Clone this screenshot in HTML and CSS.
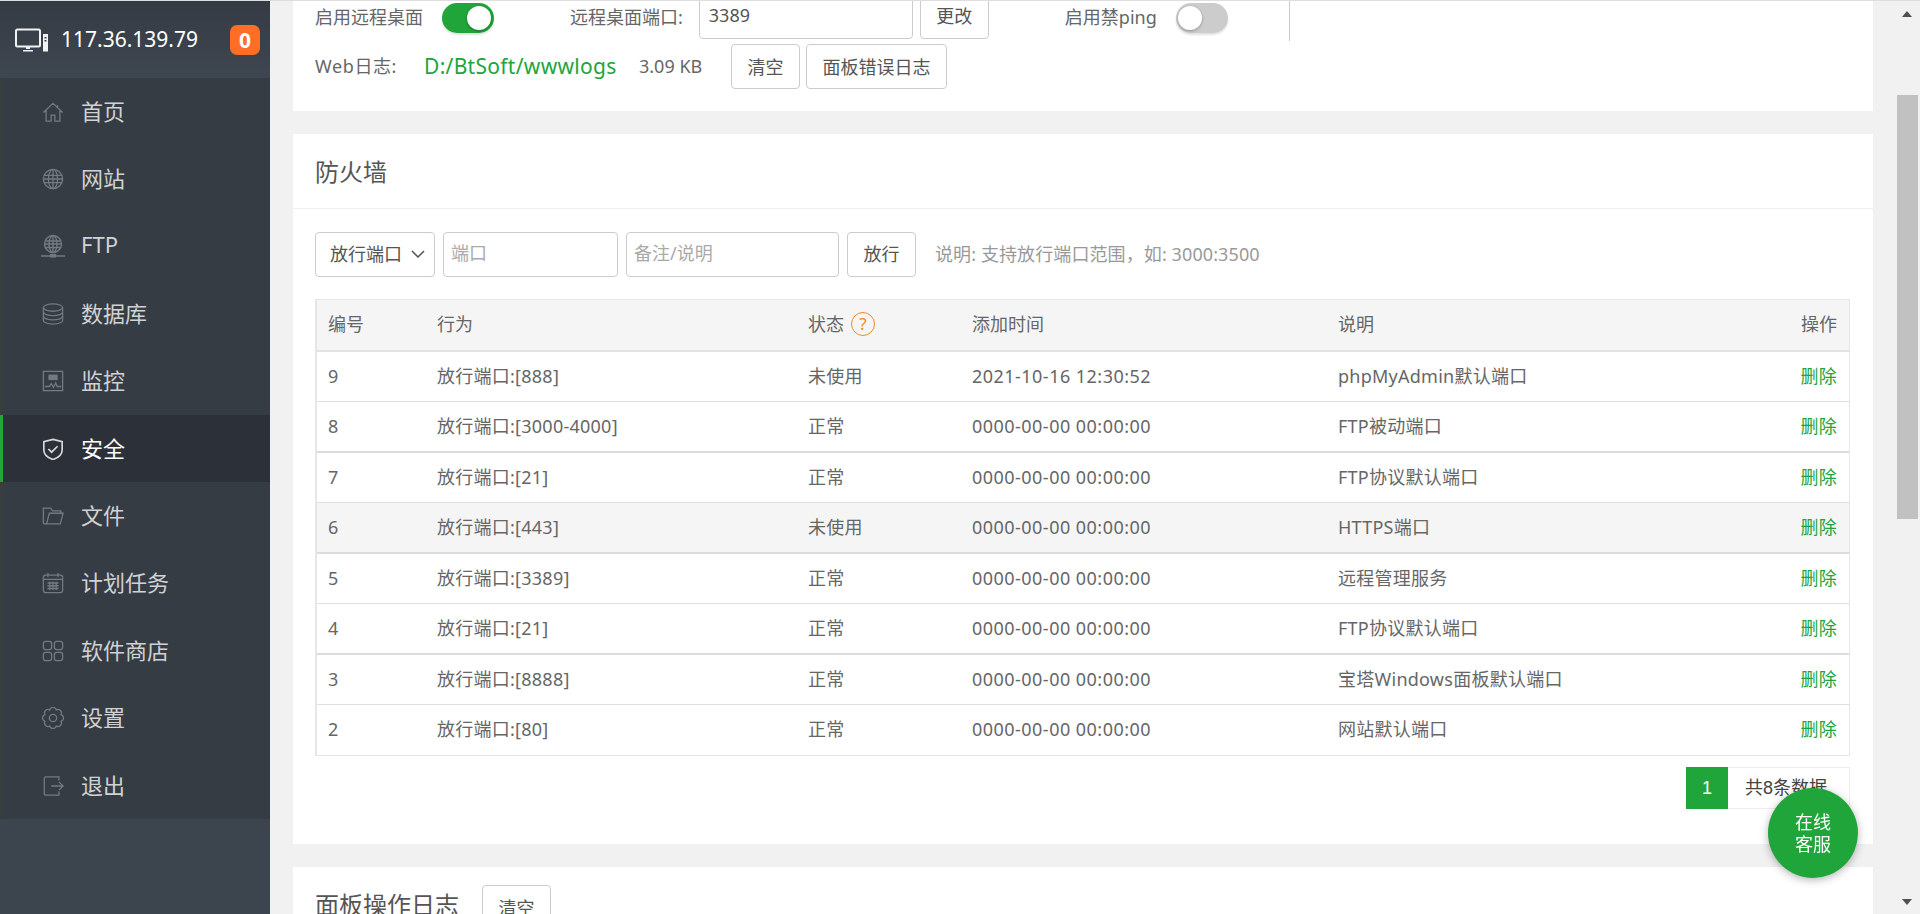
FILE: index.html
```html
<!DOCTYPE html>
<html lang="zh-CN">
<head>
<meta charset="utf-8">
<title>安全</title>
<link rel="stylesheet" href="styles.css">
</head>
<body>
<div class="app">
  <aside class="sidebar">
    <div class="host">
      <svg class="host-icon" viewBox="0 0 33 24" width="33" height="24">
        <rect x="1" y="1.5" width="24" height="17" rx="1.5" fill="none" stroke="#f2f2f2" stroke-width="2"/>
        <path d="M11 19h4v2h-4zM8 22h10v1.5H8z" fill="#f2f2f2"/>
        <path d="M28 6h5v17.5h-5z" fill="#f2f2f2"/>
        <path d="M29.5 9h2v1.5h-2zM29.5 12h2v1.5h-2z" fill="#3a414a"/>
      </svg>
      <span class="host-ip">117.36.139.79</span>
      <span class="badge">0</span>
    </div>
    <nav class="menu">
      <a class="item"><svg class="ico" viewBox="0 0 24 24"><path d="M1.5 12.5 12 2.5l10.5 10M4.5 10.5V22h5.5v-6.5h4V22h5.5V10.5M17 4.5v3"/></svg><span>首页</span></a>
      <a class="item"><svg class="ico" viewBox="0 0 24 24"><circle cx="12" cy="12" r="10.5"/><ellipse cx="12" cy="12" rx="5" ry="10.5"/><path d="M12 1.5v21M2 8h20M1.5 12h21M2 16h20"/></svg><span>网站</span></a>
      <a class="item"><svg class="ico ico-wide" viewBox="0 0 24 24"><circle cx="12" cy="10" r="8.5"/><ellipse cx="12" cy="10" rx="4" ry="8.5"/><path d="M12 1.5v17M4.5 7h15M3.5 10h17M4.5 13.5h15M0 22h24"/><path class="fill" d="M9 20h6v3.5H9z"/></svg><span>FTP</span></a>
      <a class="item"><svg class="ico" viewBox="0 0 24 24"><ellipse cx="12" cy="5" rx="10.5" ry="4"/><path d="M1.500 5v14c0 2.200 4.700 4 10.500 4s10.500-1.800 10.500-4V5M1.500 9.800c0 2.200 4.700 4 10.500 4s10.500-1.800 10.500-4M1.500 14.500c0 2.200 4.700 4 10.500 4s10.500-1.800 10.500-4"/></svg><span>数据库</span></a>
      <a class="item"><svg class="ico" viewBox="0 0 24 24"><rect x="1.500" y="1.500" width="21" height="21"/><path d="M3 18h5l2-3 2.500 4 2.500-5 1.500 4H21"/><path class="fill" d="M7 5h10v6H7z"/></svg><span>监控</span></a>
      <a class="item active"><svg class="ico" viewBox="0 0 24 24"><path d="M12 1.500 22 4v9c0 5-4.500 8.500-10 10.500C6.500 21.500 2 18 2 13V4z"/><path d="m7 12 3.500 3.500L17 9"/></svg><span>安全</span></a>
      <a class="item"><svg class="ico" viewBox="0 0 24 24"><path d="M5 20.500H2.500a1 1 0 0 1-1-1V3.500h8l2 3h9V9M5 20.500 8 9h15l-3 11.500z"/></svg><span>文件</span></a>
      <a class="item"><svg class="ico" viewBox="0 0 24 24"><rect x="1.500" y="3.500" width="21" height="19" rx="2.500"/><path d="M1.500 8h21M6.500 1v4.500M17.500 1v4.500M6 12h12M6 15h12M6 18h12M8.500 10.500v9M12 10.500v9M15.500 10.500v9"/></svg><span>计划任务</span></a>
      <a class="item"><svg class="ico" viewBox="0 0 24 24"><rect x="1.500" y="1.500" width="9" height="9" rx="2.500"/><rect x="13.500" y="1.500" width="9" height="9" rx="2.500"/><rect x="1.500" y="13.500" width="9" height="9" rx="2.500"/><rect x="13.500" y="13.500" width="9" height="9" rx="2.500"/></svg><span>软件商店</span></a>
      <a class="item"><svg class="ico" viewBox="0 0 24 24"><circle cx="12" cy="12" r="4"/><path d="M20.780 8.360A3.800 3.800 0 0 1 20.780 15.640 3.800 3.800 0 0 1 15.640 20.780 3.800 3.800 0 0 1 8.360 20.780 3.800 3.800 0 0 1 3.220 15.640 3.800 3.800 0 0 1 3.220 8.360 3.800 3.800 0 0 1 8.360 3.220 3.800 3.800 0 0 1 15.640 3.220 3.800 3.800 0 0 1 20.780 8.360Z"/></svg><span>设置</span></a>
      <a class="item"><svg class="ico" viewBox="0 0 24 24"><path d="M18.500 6V2H4a1.500 1.500 0 0 0-1.500 1.500v17A1.500 1.500 0 0 0 4 22h14.500v-4M10 12h13M18.500 7.500 23 12l-4.500 4.500"/></svg><span>退出</span></a>
    </nav>
  </aside>

  <main class="main">
    <section class="card card-server">
      <div class="row-top">
        <span class="label">启用远程桌面</span>
        <span class="toggle on"><i></i></span>
        <span class="label port-label">远程桌面端口:</span>
        <input class="field port-input" value="3389">
        <button class="btn change-btn">更改</button>
        <span class="label ping-label">启用禁ping</span>
        <span class="toggle off"><i></i></span>
        <span class="divider"></span>
      </div>
      <div class="row-log">
        <span class="label web-label">Web日志:</span>
        <a class="log-path">D:/BtSoft/wwwlogs</a>
        <span class="label log-size">3.09 KB</span>
        <button class="btn clear-btn">清空</button>
        <button class="btn err-btn">面板错误日志</button>
      </div>
    </section>

    <section class="card card-fw">
      <h2 class="card-title">防火墙</h2>
      <div class="fw-body">
        <div class="toolbar">
          <div class="select"><span>放行端口</span><svg viewBox="0 0 14 8" width="14" height="8"><path d="M1 1l6 6 6-6" fill="none" stroke="#555" stroke-width="1.500"/></svg></div>
          <input class="field port-field" placeholder="端口">
          <input class="field note-field" placeholder="备注/说明">
          <button class="btn allow-btn">放行</button>
          <span class="hint">说明: 支持放行端口范围，如: 3000:3500</span>
        </div>
        <div class="table-box">
          <table class="rules">
            <thead>
              <tr>
                <th class="c1">编号</th><th class="c2">行为</th>
                <th class="c3"><span class="th-status">状态<span class="help">?</span></span></th>
                <th class="c4">添加时间</th><th class="c5">说明</th><th class="c6">操作</th>
              </tr>
            </thead>
            <tbody>
              <tr><td>9</td><td>放行端口:[888]</td><td>未使用</td><td>2021-10-16 12:30:52</td><td>phpMyAdmin默认端口</td><td class="act"><a>删除</a></td></tr>
              <tr class="thick"><td>8</td><td>放行端口:[3000-4000]</td><td>正常</td><td>0000-00-00 00:00:00</td><td>FTP被动端口</td><td class="act"><a>删除</a></td></tr>
              <tr><td>7</td><td>放行端口:[21]</td><td>正常</td><td>0000-00-00 00:00:00</td><td>FTP协议默认端口</td><td class="act"><a>删除</a></td></tr>
              <tr class="thick hover"><td>6</td><td>放行端口:[443]</td><td>未使用</td><td>0000-00-00 00:00:00</td><td>HTTPS端口</td><td class="act"><a>删除</a></td></tr>
              <tr><td>5</td><td>放行端口:[3389]</td><td>正常</td><td>0000-00-00 00:00:00</td><td>远程管理服务</td><td class="act"><a>删除</a></td></tr>
              <tr class="thick"><td>4</td><td>放行端口:[21]</td><td>正常</td><td>0000-00-00 00:00:00</td><td>FTP协议默认端口</td><td class="act"><a>删除</a></td></tr>
              <tr><td>3</td><td>放行端口:[8888]</td><td>正常</td><td>0000-00-00 00:00:00</td><td>宝塔Windows面板默认端口</td><td class="act"><a>删除</a></td></tr>
              <tr class="last"><td>2</td><td>放行端口:[80]</td><td>正常</td><td>0000-00-00 00:00:00</td><td>网站默认端口</td><td class="act"><a>删除</a></td></tr>
            </tbody>
          </table>
        </div>
        <div class="pager"><span class="page-cur">1</span><span class="page-total">共8条数据</span></div>
      </div>
    </section>

    <section class="card card-log">
      <h2 class="card-title-inline">面板操作日志</h2>
      <button class="btn clear-btn">清空</button>
    </section>
  </main>

  <div class="scrollbar">
    <span class="arrow-up"></span>
    <span class="thumb"></span>
    <span class="arrow-down"></span>
  </div>
</div>
<a class="chat">在线<br>客服</a>
</body>
</html>
```
FILE: styles.css
```css
* { box-sizing: border-box; }
html, body { margin: 0; height: 100%; overflow: hidden; }
body {
  background: #f1f1f1;
  border-top: 1px solid #dedede;
  font-family: "Noto Sans", "Noto Sans CJK SC", sans-serif;
  font-size: 18px;
  color: #666;
}
.app { display: flex; height: 913px; overflow: hidden; }

/* sidebar */
.sidebar { flex: 0 0 270px; background: #3c444e; }
.host {
  height: 77px;
  display: flex;
  align-items: center;
  padding: 0 10px 0 15px;
  background: linear-gradient(#343b43, #3e4650);
}
.host-icon { flex: none; margin-right: 13px; }
.host-ip { flex: 1; color: #fff; font-size: 21px; line-height: 30px; white-space: nowrap; padding-bottom: 2px; }
.badge {
  width: 30px; height: 30px;
  border-radius: 7px;
  background: #ff6e24;
  color: #fff;
  font-weight: 700;
  font-size: 21px;
  line-height: 30px;
  text-align: center;
}
.menu { background: #363c44; }
.item {
  height: 67.4px;
  display: flex;
  align-items: center;
  padding-left: 39px;
  border-left: 3px solid #3a3d3d;
  color: #d0d2d4;
  font-size: 22px;
}
.item span { padding-bottom: 4px; }
.item.active { background: #2c3038; border-left-color: #20a53a; color: #fff; }
.ico {
  flex: none;
  width: 22px; height: 22px;
  margin-right: 17px;
  fill: none;
  stroke: #747a80;
  stroke-width: 1.4;
}
.ico-wide { width: 24px; height: 24px; margin-left: -1px; margin-right: 16px; }
.ico .fill { fill: #747a80; stroke: none; }
.active .ico { stroke: #d8d8d8; stroke-width: 1.8; }

/* main */
.main { flex: 1; min-width: 0; padding: 0 22px 0 23px; overflow: hidden; }
.card { background: #fff; }
.card-server { margin-top: -8px; height: 118px; padding: 0 22px; }
.row-top { display: flex; align-items: center; height: 46px; position: relative; }
.label { white-space: nowrap; line-height: 26px; }
.row-top .label { padding-top: 2px; }
.row-log .label { padding-bottom: 2px; }
.toggle {
  flex: none;
  position: relative;
  width: 52px; height: 30px;
  margin-top: 3px;
  border-radius: 15px;
  box-shadow: 0 2px 2px rgba(0, 0, 0, .12);
}
.toggle i {
  position: absolute;
  top: 3px;
  width: 24px; height: 24px;
  border-radius: 50%;
  background: #fff;
  box-shadow: 0 1px 3px rgba(0, 0, 0, .3);
}
.toggle.on { margin-left: 19px; background: #20a53a; }
.toggle.on i { left: 25px; }
.toggle.off { margin-left: 19px; background: #ccc; }
.toggle.off i { left: 2px; }
.port-label { margin-left: 76px; }
.field {
  height: 45px;
  border: 1px solid #ccc;
  border-radius: 4px;
  padding: 0 7px 2px;
  font: inherit;
  color: #555;
  background: #fff;
  outline: none;
}
.field::placeholder { color: #aaa; opacity: 1; }
.port-input { width: 214px; margin-left: 16px; height: 46px; padding-left: 9px; }
.btn {
  height: 45px;
  border: 1px solid #ccc;
  border-radius: 4px;
  background: #fff;
  color: #555;
  font: inherit;
  padding: 0 0 2px;
}
.change-btn { width: 69px; height: 46px; margin-left: 7px; }
.ping-label { margin-left: 76px; }
.divider { width: 1px; height: 50px; background: #ccc; margin-left: 61px; }
.row-log { display: flex; align-items: center; height: 45px; margin-top: 5px; }
.web-label { width: 109px; letter-spacing: .6px; }
.log-path { width: 215px; color: #20a53a; font-size: 21px; letter-spacing: .3px; white-space: nowrap; padding-bottom: 2px; }
.log-size { width: 92px; }
.clear-btn { width: 69px; }
.err-btn { width: 141px; margin-left: 6px; }

.card-fw { margin-top: 23px; height: 710px; }
.card-title {
  margin: 0;
  height: 75px;
  padding: 0 22px;
  border-bottom: 1px solid #efefef;
  font-weight: 400;
  font-size: 24px;
  line-height: 76px;
  color: #555;
}
.fw-body { padding: 22px 23px 0 22px; }
.toolbar { display: flex; align-items: center; height: 46px; }
.select {
  width: 120px; height: 45px;
  border: 1px solid #ccc;
  border-radius: 4px;
  display: flex;
  align-items: center;
  justify-content: space-between;
  padding: 0 9px 0 14px;
  color: #555;
}
.select span { padding-bottom: 2px; }
.port-field { width: 175px; margin-left: 8px; }
.note-field { width: 213px; margin-left: 8px; }
.allow-btn { width: 69px; margin-left: 8px; }
.hint { margin-left: 19px; padding-bottom: 2px; color: #999; letter-spacing: .1px; white-space: nowrap; }

.table-box { margin-top: 22px; border: 1px solid #e6e6e6; border-left-width: 2px; border-bottom: 0; }
.rules { width: 100%; table-layout: fixed; border-collapse: separate; border-spacing: 0; }
.rules th, .rules td {
  box-sizing: content-box;
  padding: 0 11px;
  height: 49px;
  font-weight: 400;
  text-align: left;
  white-space: nowrap;
  border-bottom: 1px solid #e0e0e0;
  line-height: 26px;
}
.rules td { height: 47px; padding-bottom: 2px; letter-spacing: .25px; }
.rules td:nth-child(4) { letter-spacing: .47px; }
.rules th { height: 48px; padding-bottom: 2px; background: #f5f5f5; border-bottom: 2px solid #e2e2e2; }
.rules .thick td { border-bottom-width: 2px; border-bottom-color: #dcdcdc; }
.rules .hover td { background: #f5f5f5; }
.rules .last td { height: 48px; border-bottom-color: #e6e6e6; }
.c1 { width: 87px; }
.c2 { width: 349px; }
.c3 { width: 142px; }
.c4 { width: 344px; }
.rules .c6 { width: 60px; padding-right: 12px; text-align: right; }
.rules .act { text-align: right; padding-right: 12px; }
.act a { color: #20a53a; }
.th-status { display: inline-flex; align-items: center; }
.help {
  width: 24px; height: 24px;
  margin-left: 7px;
  border: 1.500px solid #f08a24;
  border-radius: 50%;
  color: #f08a24;
  font-size: 17px;
  line-height: 21px;
  text-align: center;
}
.pager { display: flex; justify-content: flex-end; margin-top: 11px; }
.page-cur {
  width: 42px; height: 42px;
  background: #20a53a;
  color: #fff;
  font-family: "Liberation Sans", sans-serif;
  line-height: 42px;
  text-align: center;
}
.page-total {
  width: 122px; height: 42px;
  border: 1px solid #eee;
  border-left: 0;
  color: #444;
  font-family: "Liberation Sans", "Noto Sans CJK SC", sans-serif;
  line-height: 40px;
  padding-left: 17px;
  white-space: nowrap;
}

.card-log { display: flex; align-items: flex-start; margin-top: 23px; height: 80px; padding: 18px 22px 0; }
.card-title-inline { margin: 0 23px 0 0; font-weight: 400; font-size: 24px; line-height: 40px; color: #555; white-space: nowrap; }

/* scrollbar */
.scrollbar { flex: 0 0 25px; position: relative; background: #f1f1f1; }
.thumb { position: absolute; left: 2px; top: 94px; width: 21px; height: 424px; background: #c1c1c1; }
.arrow-up, .arrow-down { position: absolute; left: 7px; width: 0; height: 0; border-left: 5.500px solid transparent; border-right: 5.500px solid transparent; }
.arrow-up { top: 10px; border-bottom: 6px solid #505050; }
.arrow-down { top: 898px; border-top: 6px solid #505050; }

.chat {
  position: fixed;
  left: 1768px; top: 788px;
  width: 90px; height: 90px;
  border-radius: 50%;
  background: #20a53a;
  box-shadow: 0 2px 8px rgba(0, 0, 0, .3);
  color: #fff;
  font-size: 18px;
  line-height: 22px;
  text-align: center;
  padding-top: 23px;
}
```
